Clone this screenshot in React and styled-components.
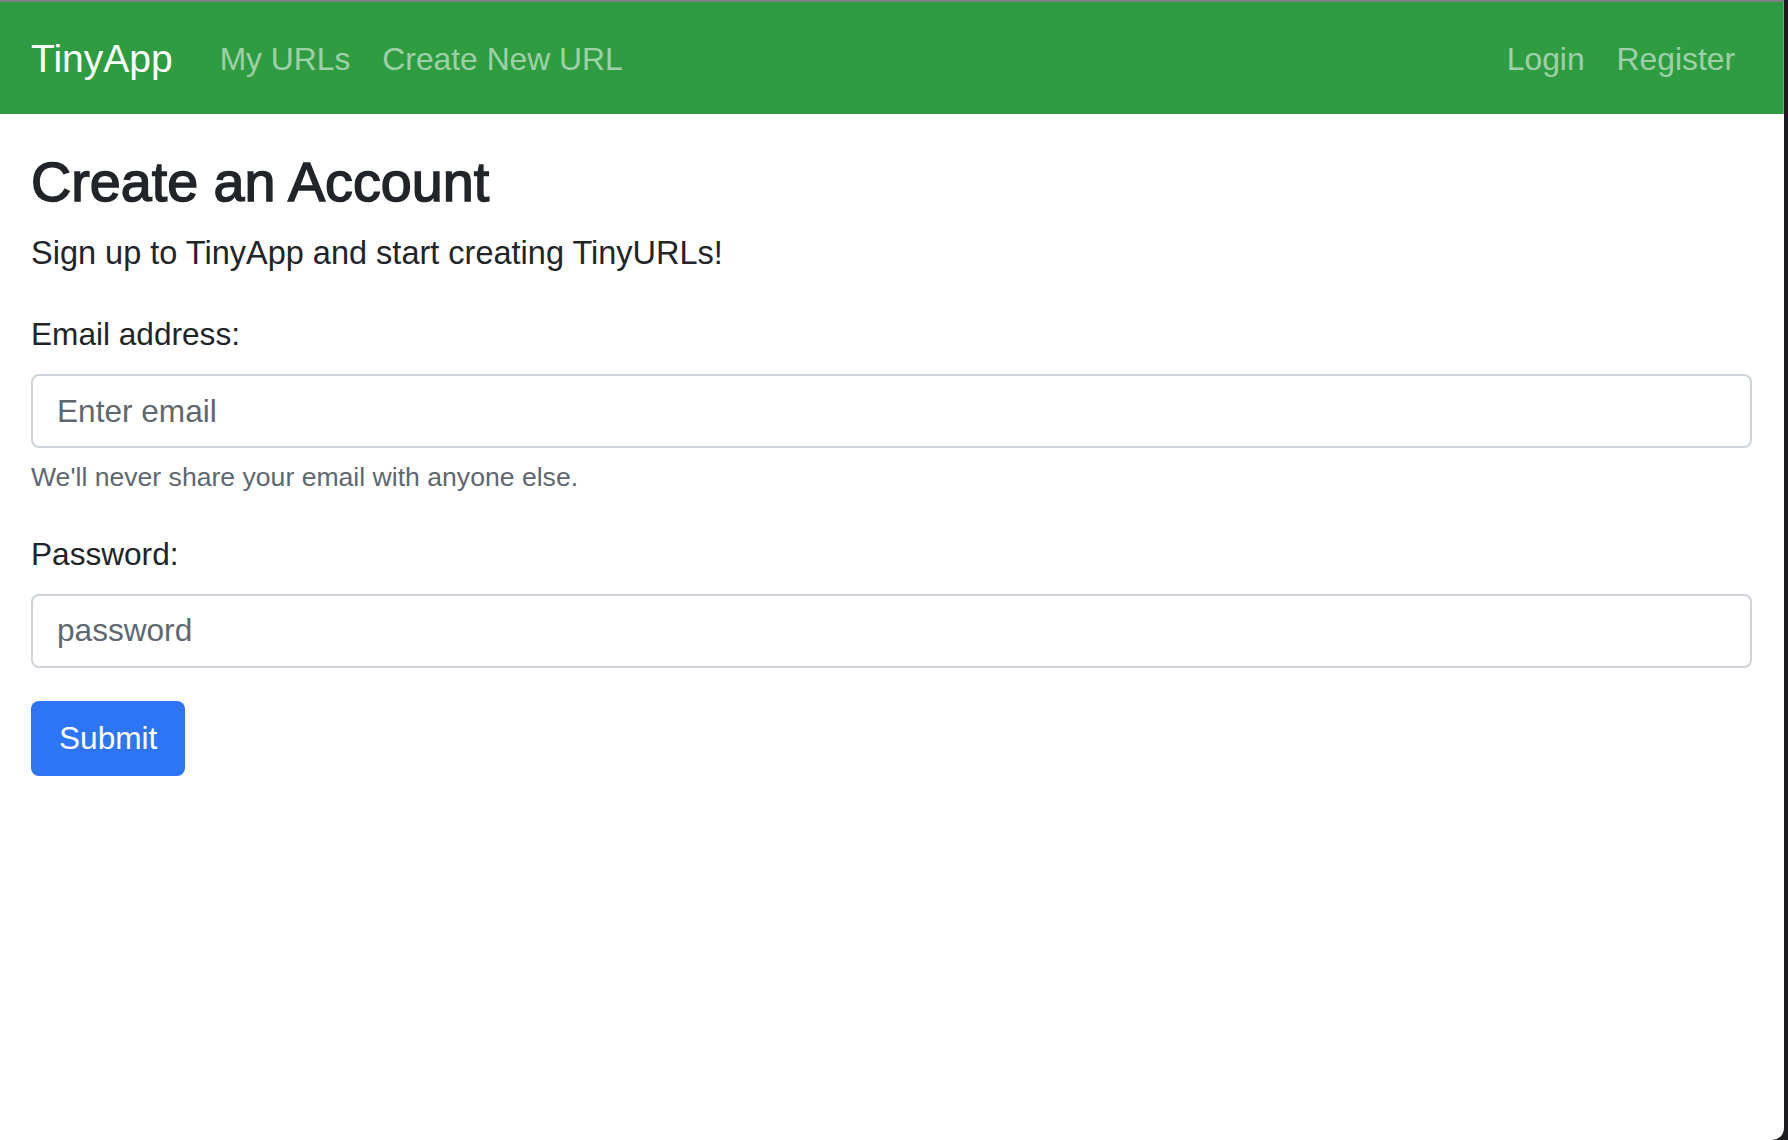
import React from 'react';
import styled, { createGlobalStyle } from 'styled-components';

const GlobalStyle = createGlobalStyle`
  html, body {
    margin: 0;
    padding: 0;
    background: #1c1c1e;
  }
  * {
    box-sizing: border-box;
  }
  body {
    font-family: "Liberation Sans", Arial, sans-serif;
    color: #212529;
  }
`;

const Window = styled.div`
  width: 1784px;
  min-height: 1140px;
  background: #ffffff;
  border-bottom-right-radius: 12px;
  overflow: hidden;
`;

const Navbar = styled.nav`
  display: flex;
  align-items: center;
  height: 114px;
  padding: 3px 32px 0 31px;
  background: #2f9c42;
  border-top: 2px solid #7a8084;
  border-right: 1px solid #5fb46e;
`;

const Brand = styled.a`
  font-size: 39px;
  line-height: 1.5;
  color: #ffffff;
  text-decoration: none;
  margin-right: 31px;
`;

const NavList = styled.div`
  display: flex;
  align-items: center;
  margin-left: ${(p) => (p.$right ? 'auto' : '0')};
`;

const NavLink = styled.a`
  font-size: 31.8px;
  line-height: 1.5;
  padding: 0 16px;
  color: rgba(255, 255, 255, 0.55);
  text-decoration: none;
`;

const Main = styled.main`
  padding: 35px 32px 0 31px;
`;

const Title = styled.h2`
  margin: 0 0 14px;
  font-size: 55.7px;
  line-height: 66px;
  font-weight: 400;
  -webkit-text-stroke: 1.5px #212529;
`;

const Lead = styled.p`
  margin: 0 0 33px;
  font-size: 32.5px;
  line-height: 48px;
`;

const Field = styled.div`
  margin-bottom: ${(p) => p.$gap || '33px'};
`;

const Label = styled.label`
  display: block;
  margin-bottom: 16px;
  font-size: 31.6px;
  line-height: 48px;
`;

const Input = styled.input`
  display: block;
  width: 100%;
  height: 74px;
  padding: 0 24px;
  font-family: inherit;
  font-size: 31.6px;
  color: #212529;
  background: #ffffff;
  border: 2px solid #ced4da;
  border-radius: 8px;
  outline: none;

  &::placeholder {
    color: #5f6770;
  }
`;

const HelpText = styled.div`
  margin-top: 10px;
  font-size: 26.6px;
  line-height: 39.6px;
  color: #5f6770;
`;

const SubmitButton = styled.button`
  height: 75px;
  padding: 0 28px;
  font-family: inherit;
  font-size: 31.6px;
  line-height: 48px;
  color: #ffffff;
  background: #2e75f6;
  border: none;
  border-radius: 8px;
  cursor: pointer;
`;

function App() {
  return (
    <>
      <GlobalStyle />
      <Window>
        <Navbar>
          <Brand href="#">TinyApp</Brand>
          <NavList>
            <NavLink href="#">My URLs</NavLink>
            <NavLink href="#">Create New URL</NavLink>
          </NavList>
          <NavList $right>
            <NavLink href="#">Login</NavLink>
            <NavLink href="#">Register</NavLink>
          </NavList>
        </Navbar>
        <Main>
          <Title>Create an Account</Title>
          <Lead>Sign up to TinyApp and start creating TinyURLs!</Lead>
          <form onSubmit={(e) => e.preventDefault()}>
            <Field $gap="32px">
              <Label htmlFor="email">Email address:</Label>
              <Input id="email" type="email" placeholder="Enter email" />
              <HelpText>We'll never share your email with anyone else.</HelpText>
            </Field>
            <Field>
              <Label htmlFor="password">Password:</Label>
              <Input id="password" type="password" placeholder="password" />
            </Field>
            <SubmitButton type="submit">Submit</SubmitButton>
          </form>
        </Main>
      </Window>
    </>
  );
}

export default App;
